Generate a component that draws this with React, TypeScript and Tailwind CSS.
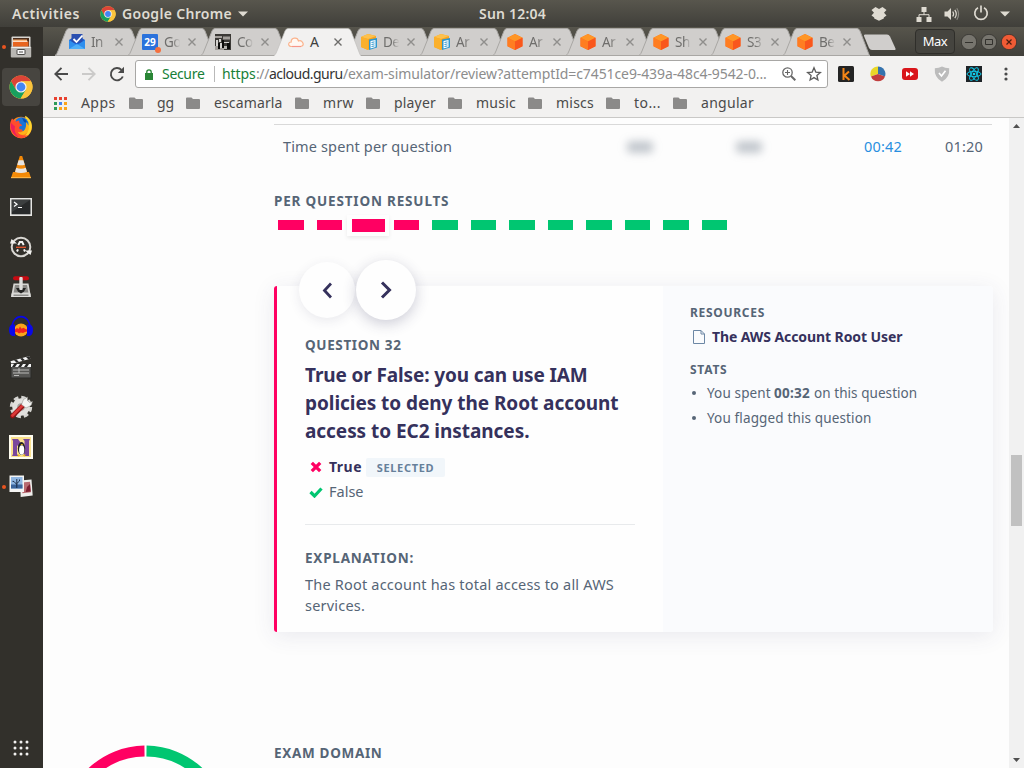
import React from "react";

const FONT = "font-['Noto_Sans','Open_Sans',sans-serif]";

function ChromeLogo({ className }: { className: string }) {
  return (
    <svg viewBox="0 0 24 24" className={className}>
      <circle cx="12" cy="12" r="11.5" fill="#fbc43c" />
      <path d="M2.04 6.25 L7.02 14.9 L12 12 L12 6.5 L21.96 6.25 A11.5 11.5 0 0 0 2.04 6.25 Z" fill="#dc4437" />
      <path d="M2.04 6.25 A11.5 11.5 0 0 0 11.6 23.5 L17 14.8 L7.1 14.9 Z" fill="#18a05e" />
      <path d="M21.96 6.25 H12 L17.2 14.6 L11.6 23.5 A11.5 11.5 0 0 0 21.96 6.25 Z" fill="#fbc43c" />
      <circle cx="12" cy="12" r="5.6" fill="#f4f4f4" />
      <circle cx="12" cy="12" r="4.4" fill="#4486f4" />
    </svg>
  );
}

function TopBar() {
  return (
    <header className="flex h-[27px] shrink-0 items-center bg-gradient-to-b from-[#58564d] to-[#403f3a] text-[14px] font-semibold text-[#dfdbd2]">
      <span className="ml-3 w-[88px] tracking-[0.56px]">Activities</span>
      <ChromeLogo className="h-4 w-4" />
      <span className="ml-[6px] w-[112px] tracking-[0.31px]">Google Chrome</span>
      <svg viewBox="0 0 10 6" className="ml-[4px] h-[6px] w-[10px]"><path d="M0 .5h10L5 5.5z" fill="#dfdbd2" /></svg>
      <span className="ml-[231px] w-[70px] tracking-[0.21px]">Sun 12:04</span>
      <span className="flex-1" />
      <svg viewBox="0 0 16 14" className="mr-[29px] h-[14px] w-4" fill="#dfdbd2">
        <path d="M4.500 0 8 2 11.500 0 15.500 3 13 5.800 15.500 8.500 12.800 10.400V11.500L8 13.800 3.200 11.500V10.400L.5 8.500 3 5.800.5 3Z" />
      </svg>
      <svg viewBox="0 0 16 16" className="mr-[12px] h-4 w-4" fill="#dfdbd2">
        <path d="M5.500 1h5v5h-5zM.5 11h5v5h-5zM10.500 11h5v5h-5z" />
        <path d="M8 6v3M3 11V8.700h10V11" fill="none" stroke="#dfdbd2" strokeWidth="1" />
      </svg>
      <svg viewBox="0 0 16 14" className="mr-[13px] h-[14px] w-4">
        <path d="M.5 4.500h3L7 1v12L3.500 9.500h-3z" fill="#dfdbd2" />
        <path d="M8.700 4.500q1.800 2.500 0 5M10.800 2.800q3 4.200 0 8.400" fill="none" stroke="#dfdbd2" strokeWidth="1.200" />
        <path d="M12.800 1.200q3.600 5.800 0 11.600" fill="none" stroke="#8c8a83" strokeWidth="1.200" />
      </svg>
      <svg viewBox="0 0 16 16" className="-mt-[2px] h-4 w-4" fill="none" stroke="#dfdbd2" strokeWidth="1.700">
        <path d="M5 2.800a6.200 6.200 0 1 0 6 0M8 .5v7" />
      </svg>
      <svg viewBox="0 0 10 6" className="mr-[14px] ml-[11px] h-[6px] w-[10px]"><path d="M0 .5h10L5 5.500z" fill="#dfdbd2" /></svg>
    </header>
  );
}

const dockIcons: { y: string; icon: React.ReactNode; running?: boolean; active?: boolean }[] = [
  {
    y: "files", running: true, icon: (
      <svg viewBox="0 0 24 24" className="h-6 w-6">
        <rect x="2.500" y="1.500" width="19" height="14" rx="1" fill="#d8d6d2" />
        <rect x="4" y="3" width="16" height="10" fill="#4a2d1c" />
        <path d="M4 4.500h14v8H4z" fill="#f6a868" /><path d="M4 6.500h15.500v6H4z" fill="#e8651f" /><path d="M4 5.800h14.500v1H4z" fill="#fff3e6" />
        <rect x="1.800" y="11.500" width="20.400" height="11" rx="1" fill="#b9b7b3" />
        <path d="M2.500 12h19v1h-19z" fill="#efeeec" />
        <rect x="8" y="14.500" width="8" height="5" rx=".5" fill="#f8f8f8" stroke="#4c4b48" /><path d="M10 17h4" stroke="#4c4b48" />
      </svg>
    ),
  },
  { y: "chrome", running: true, active: true, icon: <ChromeLogo className="h-6 w-6" /> },
  {
    y: "firefox", icon: (
      <svg viewBox="0 0 24 24" className="h-6 w-6">
        <path d="M12 1.800a10.700 10.700 0 1 0 0 21.400A10.700 10.700 0 0 0 12 1.800" fill="#ff8a16" />
        <path d="M16 .8c5.500 2.500 8 8 6.500 13.500S17 22.500 13 23c5-3 6.500-6 5-10z" fill="#ffd52e" />
        <circle cx="12.500" cy="9.300" r="7" fill="#1b74d8" />
        <path d="M13 3q5 1 5 6-1-2-3-2z" fill="#0a4fae" />
        <path d="M3 3.500c-3 5-3 12 2 16.500s11 4 15 0c-5 1.500-10 0-11.500-3.500 2 1 3.500.5 5-.7.600-1-1-1.800-2.700-1.600-1.500-2 0-3.200 2.200-3.400.5-1-1.500-1.800-2.500-2.600L10 5.500 7 6.500z" fill="#ff4d2d" />
        <path d="M2 8c-1 6 2 12 8 14.500-4-4-5-7-4-11z" fill="#ee1e5c" />
        <path d="M17 7c4 4 3.500 9 0 11.500s-7 1-8-1.500c4 2 9-2 8-10z" fill="#ffb31a" />
      </svg>
    ),
  },
  {
    y: "vlc", icon: (
      <svg viewBox="0 0 24 24" className="h-6 w-6">
        <path d="M4 17h16l2 6H2z" fill="#f48b07" /><path d="M2 22h20v1.200H2z" fill="#ffb545" />
        <path d="M10.800 1h2.400l5.300 17.500q-6.500 3-13 0z" fill="#f28808" />
        <path d="M9.600 5.200h4.800l1.400 4.500q-3.800 1.200-7.600 0zM7.200 12.800q4.800 1.700 9.600 0l1.200 4.100q-6 2-12 0z" fill="#e6e4e2" />
      </svg>
    ),
  },
  {
    y: "terminal", icon: (
      <svg viewBox="0 0 24 24" className="h-6 w-6">
        <rect x="1" y="3" width="22" height="18" fill="#e5e5e3" /><rect x="2.500" y="4.500" width="19" height="14.800" fill="#282a2b" />
        <path d="M3 5h18L3 17z" fill="#3c3f40" /><path d="m5 7 3 2.200L5 11.400M9 12.500h4" stroke="#fff" strokeWidth="1.200" fill="none" />
      </svg>
    ),
  },
  {
    y: "updater", icon: (
      <svg viewBox="0 0 24 24" className="h-6 w-6" fill="none">
        <circle cx="12" cy="12" r="9.300" stroke="#d9d7d3" strokeWidth="2" />
        <path d="M1 8.500 2.500 4 8 8.500zM23 15.500 21.500 20 16 15.500z" fill="#f1f0ee" />
        <path d="m8 16.500 1-2.200M16 16.500l-1-2.200M9.300 10.200 10.800 7h2.400l1.500 3.200" stroke="#f3f3f1" strokeWidth="2" />
        <path d="M7 12.300h10" stroke="#e8552c" strokeWidth="1.300" />
      </svg>
    ),
  },
  {
    y: "transmission", icon: (
      <svg viewBox="0 0 24 24" className="h-6 w-6">
        <path d="M4.500 8.500h15l2.500 13.500H2z" fill="#d6d5d2" /><path d="M6 10h12l1.300 7.500H4.700z" fill="#8a8986" />
        <path d="M2.500 18.500h19V22h-19z" fill="#dedddb" /><path d="M4.500 19.500h15v1.500h-15z" fill="#8f8e8b" /><path d="M7 13h10l-2 3.500-3 2-3-2z" fill="#242423" />
        <rect x="4" y="1.200" width="16" height="4" rx="2" fill="#c70a12" /><rect x="10.300" y="2" width="3.400" height="13" rx="1" fill="#dededc" />
      </svg>
    ),
  },
  {
    y: "audacity", icon: (
      <svg viewBox="0 0 24 24" className="h-6 w-6">
        <ellipse cx="12" cy="15" rx="7" ry="6.500" fill="#f9a51a" />
        <path d="M6 14.500 8 13l1.500 1 1.500-2.500 1.500 2.200 2-1 2 1.300 1.500.5v2l-2 .5-2 1-2-.5-2 1-2-1.500-2 .5z" fill="#f3221f" />
        <path d="M3 14C2.500-2.500 21.500-2.500 21 14" fill="none" stroke="#0a08e8" strokeWidth="1.600" />
        <path d="M3.500 9.500H6v11.500H3.500Q0 20 0 15t3.500-5.500M20.500 9.500H18v11.500h2.500q3.500-1 3.500-6t-3.500-5.500" fill="#0a08e8" />
      </svg>
    ),
  },
  {
    y: "clapper", icon: (
      <svg viewBox="0 0 24 24" className="h-6 w-6">
        <path d="M1.500 6.200 20.500 1l.8 2.800L2.500 9z" fill="#f4f4f4" /><path d="m5 5.200 2.500 2.400 2.500-.7-2.500-2.400zM11 3.600 13.500 6l2.500-.7-2.500-2.400zM17 2l2.300 2.300 2-.5-.8-2.700z" fill="#272726" />
        <rect x="2" y="9" width="20" height="14" fill="#555553" stroke="#2a2a29" />
        <path d="M2 9h20v3H2z" fill="#f4f4f4" /><path d="m5 9-2 3h3l2-3zM11 9l-2 3h3l2-3zM17 9l-2 3h3l2-3z" fill="#272726" />
        <path d="M4 15h16M4 18h16M10 13v5M5 20.500h5" stroke="#c5c5c3" strokeWidth=".9" />
      </svg>
    ),
  },
  {
    y: "tools", icon: (
      <svg viewBox="0 0 24 24" className="h-6 w-6">
        <circle cx="12" cy="12" r="9.500" fill="none" stroke="#d5d4d1" strokeWidth="3.400" strokeDasharray="4.600 2.860" />
        <circle cx="12" cy="12" r="6.300" fill="#a5a39f" stroke="#e1e0dd" strokeWidth="5" />
        <path d="m3.500 21 10-10" stroke="#8f1414" strokeWidth="4.600" strokeLinecap="round" /><path d="m3.500 20.500 10-10" stroke="#dc3838" strokeWidth="2.800" strokeLinecap="round" />
        <path d="m12.500 9.500 2-5 4-2.500v3.500l2 2 3-1-1.500 4-5 2.500z" fill="#f4f4f2" stroke="#8b8985" strokeWidth=".5" />
      </svg>
    ),
  },
  {
    y: "n-penguin", icon: (
      <svg viewBox="0 0 24 24" className="h-6 w-6">
        <rect width="24" height="24" fill="#fffdf0" /><rect x="2" y="2" width="20" height="20" fill="#fbe18d" />
        <path d="M3 4h6l6.500 9V6L14 4h7l-1 2v15h-4L8 10v9l1.500 2H3l1-2V6z" fill="#7a489c" />
        <ellipse cx="12.500" cy="13.500" rx="3.700" ry="6.500" fill="#222" /><ellipse cx="12.700" cy="15" rx="2.600" ry="4.700" fill="#fff" />
        <path d="M11.500 9h2.500l-1 1.500zM8.500 19l3 1.500-2.500 1zM16.500 19l-3 1.500 2.500 1z" fill="#efb91b" />
      </svg>
    ),
  },
  {
    y: "photos", running: true, icon: (
      <svg viewBox="0 0 24 24" className="-mt-[2px] h-6 w-6">
        <path d="m11 6.500 11.500-1 1.200 16-12 1.500z" fill="#efeeec" /><path d="m13 8.500 8-.7.900 10.500-8.500.9z" fill="#b86a70" /><path d="m18 13 3-3 .7 7.500-5 .5z" fill="#7d1f30" />
        <rect x=".5" y="1.500" width="14.500" height="16.500" fill="#f5f5f4" /><rect x="2" y="3" width="11.500" height="11.500" fill="#8fb6e2" />
        <path d="M2 10.500h11.500v4H2z" fill="#3b649b" /><path d="M7.800 14V8M7.800 10.500 5 7.500M7.800 9.500l2.700-2.500M7.800 8V5M5 7.500 3.500 7.300M10.500 7V5.500" stroke="#13233a" strokeWidth=".9" fill="none" />
      </svg>
    ),
  },
];

function Dock() {
  return (
    <aside className="flex w-[43px] shrink-0 flex-col bg-[#32302b]">
      {dockIcons.map((d) => (
        <div key={d.y} className="flex h-10 w-full shrink-0 items-center">
          <span className={d.running ? "ml-[2px] h-1 w-1 shrink-0 rounded-full bg-[#e95420]" : "ml-[2px] h-1 w-1 shrink-0"} />
          <span className={d.active ? "-ml-[4px] flex h-[38px] w-[38px] items-center justify-center rounded bg-[#474540]" : "-ml-[4px] flex h-[38px] w-[38px] items-center justify-center"}>
            {d.icon}
          </span>
        </div>
      ))}
      <svg viewBox="0 0 16 16" className="mt-auto mb-[12px] ml-[13px] h-4 w-4" fill="#f2f1f0">
        {[2, 8, 14].map((y) => [2, 8, 14].map((x) => <circle key={x + "-" + y} cx={x} cy={y} r="1.500" />))}
      </svg>
    </aside>
  );
}

function InboxIcon() {
  return (
    <svg viewBox="0 0 16 16" className="h-4 w-4">
      <path d="M0 6 8 1l8 5v9H0z" fill="#1b5fd0" /><path d="M2.500 0h11v9h-11z" fill="#2a4fb0" /><path d="m4.500 5 3 3L13.500 1.500" fill="none" stroke="#fff" strokeWidth="1.800" />
      <path d="m0 6 8 5 8-5v9H0z" fill="#2f8fee" /><path d="m0 15 8-5 8 5z" fill="#50b0f8" />
    </svg>
  );
}
function CalendarIcon() {
  return (
    <span className="relative flex h-4 w-4 items-center justify-center rounded-[1px] bg-[#2a72dc] text-[10px] leading-4 font-bold text-white">
      29
      <span className="absolute -right-[3px] -bottom-[3px] h-[6px] w-[6px] rounded-full bg-[#f4703e]" />
    </span>
  );
}
function PhotoIcon() {
  return (
    <svg viewBox="0 0 16 16" className="h-4 w-4">
      <path d="M0 0h16v16H0z" fill="#3b3936" /><path d="M0 2h7v2H0zM8 2.500h7v3H8zM0 12h9v4H0z" fill="#a39f9b" />
      <path d="M1 6h2v6H1zM4 5h2v3H4zM5 9h2v5H5zM9 8h5v1H9z" fill="#d5d3d0" /><path d="M3 9h2v6H3zM7 6h2v8H7zM12 9h3v6h-3z" fill="#0c0c0b" /><path d="M9 12h3v3H9z" fill="#b5b3af" />
    </svg>
  );
}
function CloudIcon() {
  return (
    <svg viewBox="0 0 16 16" className="h-4 w-4" fill="none" strokeWidth="1.200">
      <path d="M3.500 12.500C-.5 12.500 0 7.800 3.200 8 3 3.500 9.500 2.500 10.500 7c4-1.500 7 4.800 2.200 5.500z" stroke="#fbb38c" fill="#fff8f3" /><path d="M4 12.500h9" stroke="#f7968a" />
    </svg>
  );
}
function DocsIcon() {
  return (
    <svg viewBox="0 0 16 16" className="h-4 w-4">
      <path d="m0 3 7-3 8 2v10l-8 4-7-3z" fill="#f9a51f" /><path d="m0 3 7 2 8-3-8-2z" fill="#fdc14d" /><path d="M7 5v11l-7-3V3z" fill="#fbb02c" />
      <path d="m8 5.500 8-1.500v9.500L8 16z" fill="#2d97cf" /><path d="m9.500 7 5-1v7l-5 1.500z" fill="#fff" /><path d="m10.500 8.500 3-.6M10.500 10.500l3-.6M10.500 12.500l3-.6" stroke="#2d97cf" />
    </svg>
  );
}
function CubeIcon() {
  return (
    <svg viewBox="0 0 16 16" className="h-4 w-4">
      <path d="m8 0 7.500 3.800v8.400L8 16 .5 12.200V3.800z" fill="#ff6d1f" /><path d="m8 0 7.500 3.800L8 7.500.5 3.800z" fill="#ff9626" /><path d="M8 7.500v8.500L.5 12.200V3.800z" fill="#ff7d21" /><path d="M8 7.500 15.500 3.800v8.400L8 16z" fill="#f9571d" />
    </svg>
  );
}

const tabs: { label: string; icon: React.ReactNode; active?: boolean }[] = [
  { label: "In", icon: <InboxIcon /> },
  { label: "Go", icon: <CalendarIcon /> },
  { label: "Co", icon: <PhotoIcon /> },
  { label: "A", icon: <CloudIcon />, active: true },
  { label: "De", icon: <DocsIcon /> },
  { label: "Ar", icon: <DocsIcon /> },
  { label: "Ar", icon: <CubeIcon /> },
  { label: "Ar", icon: <CubeIcon /> },
  { label: "Sh", icon: <CubeIcon /> },
  { label: "S3", icon: <CubeIcon /> },
  { label: "Be", icon: <CubeIcon /> },
];

function Tab({ label, icon, active }: { label: string; icon: React.ReactNode; active?: boolean }) {
  return (
    <div className={active ? "relative z-20 h-[29px] w-[73px] shrink-0" : "relative h-[29px] w-[73px] shrink-0 nth-[n+9]:w-[72px]"}>
      <svg viewBox="0 0 87 29" className="absolute top-0 left-0 h-[29px] w-[87px]">
        <path d="M0 29Q2 27.500 3 24L11 4Q12 1.500 14 1.500H74Q76 1.500 77 4L85 25Q86 28 87 29Z" fill={active ? "#f2f1f0" : "#d0cecc"} />
        <path d={active ? "M0 28.500Q2 27 3 24L11 4Q12 1.500 14 1.500H74Q76 1.500 77 4L85 25Q86 28 87 28.500" : "M0 28.500Q2 27 3 24L11 4Q12 1.500 14 1.500H74Q76 1.500 77 4L85 25Q86 28 87 28.500Z"} fill="none" stroke={active ? "#c2c0bd" : "#a9a7a4"} strokeWidth={active ? ".7" : "1"} />
      </svg>
      <div className="relative flex h-[29px] items-center pl-[14px]">
        {icon}
        <span className={active ? "ml-[6px] w-[17px] text-[14px] leading-5 tracking-[-0.3px] whitespace-nowrap text-[#3f3f3f]" : "ml-[6px] w-[17px] text-[13.500px] leading-5 tracking-[-0.5px] whitespace-nowrap text-[#6f6e6c] [mask-image:linear-gradient(to_right,#000_50%,transparent_95%)]"}>
          {label}
        </span>
        <svg viewBox="0 0 8 8" className="ml-[7px] h-2 w-2 shrink-0"><path d="m.5.5 7 7m0-7-7 7" stroke={active ? "#6d6c6a" : "#8f8e8c"} strokeWidth="1.400" /></svg>
      </div>
    </div>
  );
}

function TabStrip() {
  return (
    <div className="flex h-[29px] shrink-0 bg-gradient-to-b from-[#57554c] to-[#403f3a] pl-3">
      {tabs.map((t, i) => <Tab key={i} {...t} />)}
      <svg viewBox="0 0 34 17" className="mt-[7px] ml-[8px] h-[17px] w-[34px] shrink-0"><path d="M2 .5h22q2 0 3 2l5.500 12q.5 1.500-1 1.500H9q-2 0-3-2L1 2Q.5.5 2 .5" fill="#d0cecc" /></svg>
      <div className="mt-[2px] ml-[18px] flex h-[25px] w-10 shrink-0 items-center justify-center rounded-[4px] border border-[#2f2e2a] bg-[#45443f] text-[13px] tracking-[-0.5px] text-white">Max</div>
      <div className="mt-[7px] ml-[6px] flex gap-[4px]">
        <svg viewBox="0 0 16 16" className="h-4 w-4"><circle cx="8" cy="8" r="7.700" fill="#77756e" stroke="#33322e" strokeWidth=".8" /><path d="M4 8.500h8" stroke="#32312d" /></svg>
        <svg viewBox="0 0 16 16" className="h-4 w-4"><circle cx="8" cy="8" r="7.700" fill="#77756e" stroke="#33322e" strokeWidth=".8" /><path d="M4.500 5.500h7v5h-7z" fill="none" stroke="#32312d" /></svg>
        <svg viewBox="0 0 16 16" className="h-4 w-4"><circle cx="8" cy="8" r="7.700" fill="#f05b35" stroke="#33322e" strokeWidth=".8" /><path d="m5.500 5.500 5 5m0-5-5 5" stroke="#4a1d10" strokeWidth="1.200" /></svg>
      </div>
    </div>
  );
}

function Toolbar() {
  return (
    <div className="flex h-9 shrink-0 items-center bg-[#f2f1f0]">
      <svg viewBox="0 0 14 14" className="ml-[11px] h-[14px] w-[14px]" fill="none" stroke="#4a4a4a" strokeWidth="1.900"><path d="M14 7H1.500M7.500.8 1.300 7l6.200 6.200" /></svg>
      <svg viewBox="0 0 14 14" className="ml-[14px] h-[14px] w-[14px]" fill="none" stroke="#cbcac9" strokeWidth="1.900"><path d="M0 7h12.500M6.500.8 12.700 7l-6.200 6.200" /></svg>
      <svg viewBox="0 0 16 16" className="ml-[13px] h-4 w-4" fill="none" stroke="#4a4a4a" strokeWidth="1.900"><path d="M13.800 10.500A6.200 6.200 0 1 1 12.500 3.800" /><path d="M15 .8V7H8.800z" fill="#4a4a4a" stroke="none" /></svg>
      <div className="ml-[10px] flex h-[28px] w-[693px] items-center rounded-[3px] border border-[#a8a7a5] bg-white text-[14px] leading-5">
        <svg viewBox="0 0 8 11" className="ml-[9px] h-[11px] w-2"><path d="M0 4h8v7H0z" fill="#2a8636" /><path d="M1.800 4.500V3a2.200 2.200 0 0 1 4.400 0v1.500" fill="none" stroke="#2a8636" strokeWidth="1.300" /></svg>
        <span className="ml-[9px] w-[44px] tracking-[-0.31px] text-[#178037]">Secure</span>
        <span className="ml-[8px] h-4 w-px bg-[#b9b9b9]" />
        <span className="ml-[7px] flex whitespace-nowrap">
          <span className="w-[34px] tracking-[-0.1px] text-[#178037]">https</span>
          <span className="w-[13px] tracking-[-0.4px] text-[#8d8d8d]">://</span>
          <span className="w-[74px] tracking-[-0.53px] text-[#333]">acloud.guru</span>
          <span className="w-[434px] tracking-[-0.1px] text-[#8d8d8d]">/exam-simulator/review?attemptId=c7451ce9-439a-48c4-9542-0...</span>
        </span>
        <svg viewBox="0 0 14 14" className="ml-[5px] h-[14px] w-[14px] shrink-0" fill="none" stroke="#686868"><circle cx="5.500" cy="5.500" r="4.700" strokeWidth="1.300" /><path d="m9 9 4.300 4.300" strokeWidth="2" /><path d="M3 5.500h5M5.500 3v5" strokeWidth="1.100" /></svg>
        <svg viewBox="0 0 16 16" className="ml-[10px] h-4 w-4 shrink-0" fill="none" stroke="#5c5c5c" strokeWidth="1.300"><path d="m8 1.800 1.800 4.300 4.600.4-3.500 3 1 4.500L8 11.600 4.100 14l1-4.500-3.500-3 4.600-.4z" /></svg>
      </div>
      <svg viewBox="0 0 16 16" className="ml-[10px] h-4 w-4"><rect width="16" height="16" rx="1.500" fill="#242424" /><path d="M5.500 2v12M11 5.500 6.500 9.500 11.500 14" fill="none" stroke="#f58516" strokeWidth="2" /></svg>
      <svg viewBox="0 0 16 16" className="ml-4 h-4 w-4"><path d="M8 8 .8 10.500A7.500 7.500 0 0 1 8 .5z" fill="#e9d729" /><path d="M8 8V.5a7.500 7.500 0 0 1 7 10z" fill="#3573ae" /><path d="m8 8 7 2.500a7.500 7.500 0 0 1-14 0z" fill="#c13e3e" /></svg>
      <svg viewBox="0 0 16 12" className="ml-4 h-3 w-4"><rect width="16" height="12" rx="3" fill="#d9151a" /><path d="M4 3.200 8 6 4 8.800zM8 3.200 12 6 8 8.800z" fill="#fff" /></svg>
      <svg viewBox="0 0 16 16" className="ml-4 h-4 w-4"><path d="M8 .5q3 1.500 7.200 1.800Q16 11.500 8 15.800 0 11.500.8 2.300 5 2 8 .5" fill="#bcbcbc" /><path d="m5 7 2.500 3L11.500 4.800" fill="none" stroke="#fff" strokeWidth="1.700" /></svg>
      <svg viewBox="0 0 16 16" className="ml-4 h-4 w-4"><path d="M0 0h16v16H0z" fill="#1e2327" /><g fill="none" stroke="#10d0f2" strokeWidth=".9"><ellipse cx="8" cy="8" rx="7" ry="2.700" /><ellipse cx="8" cy="8" rx="7" ry="2.700" transform="rotate(60 8 8)" /><ellipse cx="8" cy="8" rx="7" ry="2.700" transform="rotate(120 8 8)" /></g><circle cx="8" cy="8" r="1.300" fill="#10d0f2" /></svg>
      <svg viewBox="0 0 4 14" className="ml-[22px] h-[14px] w-1" fill="#4a4a4a"><circle cx="2" cy="2" r="1.600" /><circle cx="2" cy="7" r="1.600" /><circle cx="2" cy="12" r="1.600" /></svg>
    </div>
  );
}

const bookmarks: { label: string; cls: string }[] = [
  { label: "gg", cls: "w-[30px] tracking-[-0.11px]" },
  { label: "escamarla", cls: "w-[82px] tracking-[0.13px]" },
  { label: "mrw", cls: "w-[44px] tracking-[0.37px]" },
  { label: "player", cls: "w-[55px] tracking-[0.18px]" },
  { label: "music", cls: "w-[53px] tracking-[0.24px]" },
  { label: "miscs", cls: "w-[51px] tracking-[0.23px]" },
  { label: "to...", cls: "w-[40px] tracking-[0.44px]" },
  { label: "angular", cls: "w-[60px] tracking-[0.28px]" },
];

function Bookmarks() {
  const colors = ["#e8412f", "#e8412f", "#e8412f", "#2d9a57", "#4486f4", "#fba51c", "#2d9a57", "#fba51c", "#fba51c"];
  return (
    <div className="flex h-[26px] shrink-0 items-center border-b border-[#c9c8c6] bg-[#f2f1f0] pb-[3px] text-[14px] leading-5 text-[#4a4a4a]">
      <div className="ml-[11px] grid grid-cols-3 gap-[2px]">
        {colors.map((c, i) => <span key={i} className="h-[3px] w-[3px]" style={{ backgroundColor: c }} />)}
      </div>
      <span className="ml-[14px] w-[48px] tracking-[0.41px]">Apps</span>
      {bookmarks.map((b) => (
        <span key={b.label} className="flex items-center">
          <svg viewBox="0 0 14 12" className="h-3 w-[14px]"><path d="M1 .5h4.500L7 2h6q1 0 1 1v8q0 1-1 1H1q-1 0-1-1V1.500q0-1 1-1" fill="#8b8a89" /></svg>
          <span className={"ml-[14px] -mr-px " + b.cls}>{b.label}</span>
        </span>
      ))}
    </div>
  );
}

const results = ["bad", "bad", "current", "bad", "ok", "ok", "ok", "ok", "ok", "ok", "ok", "ok"];

function QuestionCard() {
  return (
    <section className="relative mt-[56px] flex h-[346px] w-[719px] rounded-[4px] bg-[#fefefe] shadow-[0_4px_22px_rgba(60,60,110,0.10)]">
      <div className="w-[3px] shrink-0 rounded-l-[3px] bg-[#ff0062]" />
      <div className="flex w-[386px] shrink-0 flex-col pl-[28px] text-[14.500px] leading-[21px] text-[#566576]">
        <h3 className="mt-[49px] text-[13.500px] leading-5 font-bold tracking-[0.640px]">QUESTION 32</h3>
        <h2 className="mt-[6px] text-[19px] leading-[28px] font-bold tracking-[-0.050px] text-[#35315c]">
          <span className="block tracking-[-0.120px]">True or False: you can use IAM</span>
          <span className="block">policies to deny the Root account</span>
          <span className="block">access to EC2 instances.</span>
        </h2>
        <div className="mt-[9px] flex h-[25px] items-center">
          <svg viewBox="0 0 12 12" className="ml-[5px] h-3 w-3"><path d="m1.800 1.800 8.400 8.400m0-8.400-8.400 8.400" stroke="#ff0062" strokeWidth="3.300" /></svg>
          <span className="ml-[7px] w-[37px] text-[14px] font-bold tracking-[0.48px] text-[#35315c]">True</span>
          <span className="mt-[1px] flex h-[19px] w-[79px] items-center justify-center rounded-[2px] bg-[#f1f6fa] text-[11px] font-bold tracking-[0.67px] text-[#66809a]">SELECTED</span>
        </div>
        <div className="flex h-[25px] items-center">
          <svg viewBox="0 0 14 12" className="ml-[4px] h-3 w-[14px]"><path d="m1.500 6 4 4 7-7.500" fill="none" stroke="#00c671" strokeWidth="3.200" /></svg>
          <span className="ml-[6px]">False</span>
        </div>
        <hr className="mt-[20px] w-[330px] border-[#e8eaec]" />
        <h3 className="mt-[23px] text-[13.500px] leading-5 font-bold tracking-[0.780px]">EXPLANATION:</h3>
        <p className="mt-[6px] tracking-[0.2px] whitespace-nowrap">The Root account has total access to all AWS<br />services.</p>
      </div>
      <div className="flex flex-1 flex-col rounded-r-[4px] bg-[#fafbfd] pl-[27px] text-[13.500px] leading-5 text-[#566576]">
        <h4 className="mt-[17px] text-[12px] font-bold tracking-[0.7px]">RESOURCES</h4>
        <div className="mt-[4px] flex items-center text-[14px] font-bold tracking-[-0.09px] text-[#35315c]">
          <svg viewBox="0 0 12 14" className="mr-[7px] ml-[3px] h-[14px] w-3" fill="none" stroke="#6c87a5"><path d="M.5.5h7.500l3.500 3.500v9.500H.5zM8 .5V4h3.500" /></svg>
          The AWS Account Root User
        </div>
        <h4 className="mt-[13px] text-[12px] font-bold tracking-[0.76px]">STATS</h4>
        <ul>
          <li className="flex h-[25px] items-center">
            <span className="mr-[11px] ml-[2px] h-1 w-1 rounded-full bg-[#566576]" />
            <span className="w-[67px] tracking-[0.14px]">You spent</span>
            <b className="w-[40px] tracking-[0.25px]">00:32</b>
            <span className="tracking-[0.06px]">on this question</span>
          </li>
          <li className="flex h-[25px] items-center tracking-[0.14px]">
            <span className="mr-[11px] ml-[2px] h-1 w-1 rounded-full bg-[#566576]" />
            You flagged this question
          </li>
        </ul>
      </div>
      <div className="absolute -top-[26px] left-[25px] flex items-center">
        <button className="flex h-[56px] w-[56px] items-center justify-center rounded-full bg-[#fefefe] shadow-[0_3px_12px_rgba(50,50,93,0.10)]">
          <svg viewBox="0 0 10 17" className="h-[17px] w-[10px]" fill="none" stroke="#35315c" strokeWidth="2.800"><path d="M9 1.500 2.500 8.500 9 15.500" /></svg>
        </button>
        <button className="ml-px flex h-[60px] w-[60px] items-center justify-center rounded-full bg-[#fefefe] shadow-[0_4px_14px_rgba(50,50,93,0.24)]">
          <svg viewBox="0 0 12 18" className="h-[18px] w-3" fill="none" stroke="#35315c" strokeWidth="3"><path d="m2 1.500 7.500 7.500L2 16.500" /></svg>
        </button>
      </div>
    </section>
  );
}

function Page() {
  return (
    <div className="flex min-h-0 flex-1">
      <main className="flex min-w-0 flex-1 flex-col overflow-hidden bg-[#fdfdfd] pt-[6px]">
        <div className="ml-[231px] flex flex-col text-[#566576]">
          <div className="flex h-[44px] w-[718px] items-center border-t border-[#d9d9d9] text-[14.500px]">
            <span className="ml-[9px] w-[344px] tracking-[0.14px]">Time spent per question</span>
            <span className="h-[12px] w-[26px] rounded bg-[#566576]/35 blur-[4px]" />
            <span className="ml-[83px] h-[12px] w-[26px] rounded bg-[#566576]/35 blur-[4px]" />
            <span className="ml-[102px] w-[81px] tracking-[0.2px] text-[#288fe0]">00:42</span>
            <span className="tracking-[0.2px]">01:20</span>
          </div>
          <h3 className="mt-[23px] text-[13.500px] leading-5 font-bold tracking-[0.820px]">PER QUESTION RESULTS</h3>
          <div className="mt-[9px] flex h-[10px] items-center pl-[4px]">
            {results.map((r, i) => (
              <div key={i} className="flex h-[10px] w-[38.500px] items-center">
                {r === "current" ? (
                  <span className="-ml-[8px] flex h-[21px] w-[42px] shrink-0 items-center justify-center bg-[#fefefe] shadow-[0_2px_4px_rgba(0,0,0,0.08)]">
                    <span className="h-[13px] w-[33px] bg-[#ff0062]" />
                  </span>
                ) : (
                  <span className={r === "ok" ? "h-[10px] w-[25.500px] bg-[#00c671]" : "h-[10px] w-[25.500px] bg-[#ff0062]"} />
                )}
              </div>
            ))}
          </div>
          <QuestionCard />
        </div>
        <div className="mt-[111px] flex text-[#566576]">
          <svg viewBox="0 0 168 168" className="mt-[2px] mr-[44px] ml-[19px] h-[168px] w-[168px] shrink-0" fill="none" strokeWidth="11">
            <path d="M82.500 6A77.500 77.500 0 0 0 6 83.500" stroke="#ff0062" />
            <path d="M84.500 6A77.500 77.500 0 0 1 161 83.500" stroke="#00c671" />
          </svg>
          <h3 className="text-[13.500px] leading-5 font-bold tracking-[0.680px]">EXAM DOMAIN</h3>
        </div>
      </main>
      <div className="flex w-[15px] shrink-0 flex-col items-center bg-[#f1f1f1]">
        <svg viewBox="0 0 7 4" className="mt-[6px] h-1 w-[7px]"><path d="M3.500 0 7 4H0z" fill="#505050" /></svg>
        <div className="mt-[327px] h-[71px] w-[11px] bg-[#c1c1c1]" />
        <svg viewBox="0 0 7 4" className="mt-auto mb-[6px] h-1 w-[7px]"><path d="M3.500 4 7 0H0z" fill="#505050" /></svg>
      </div>
    </div>
  );
}

export default function App() {
  return (
    <div className={"flex h-[768px] w-[1024px] flex-col overflow-hidden " + FONT}>
      <TopBar />
      <div className="flex min-h-0 flex-1">
        <Dock />
        <div className="flex min-w-0 flex-1 flex-col">
          <TabStrip />
          <Toolbar />
          <Bookmarks />
          <Page />
        </div>
      </div>
    </div>
  );
}
